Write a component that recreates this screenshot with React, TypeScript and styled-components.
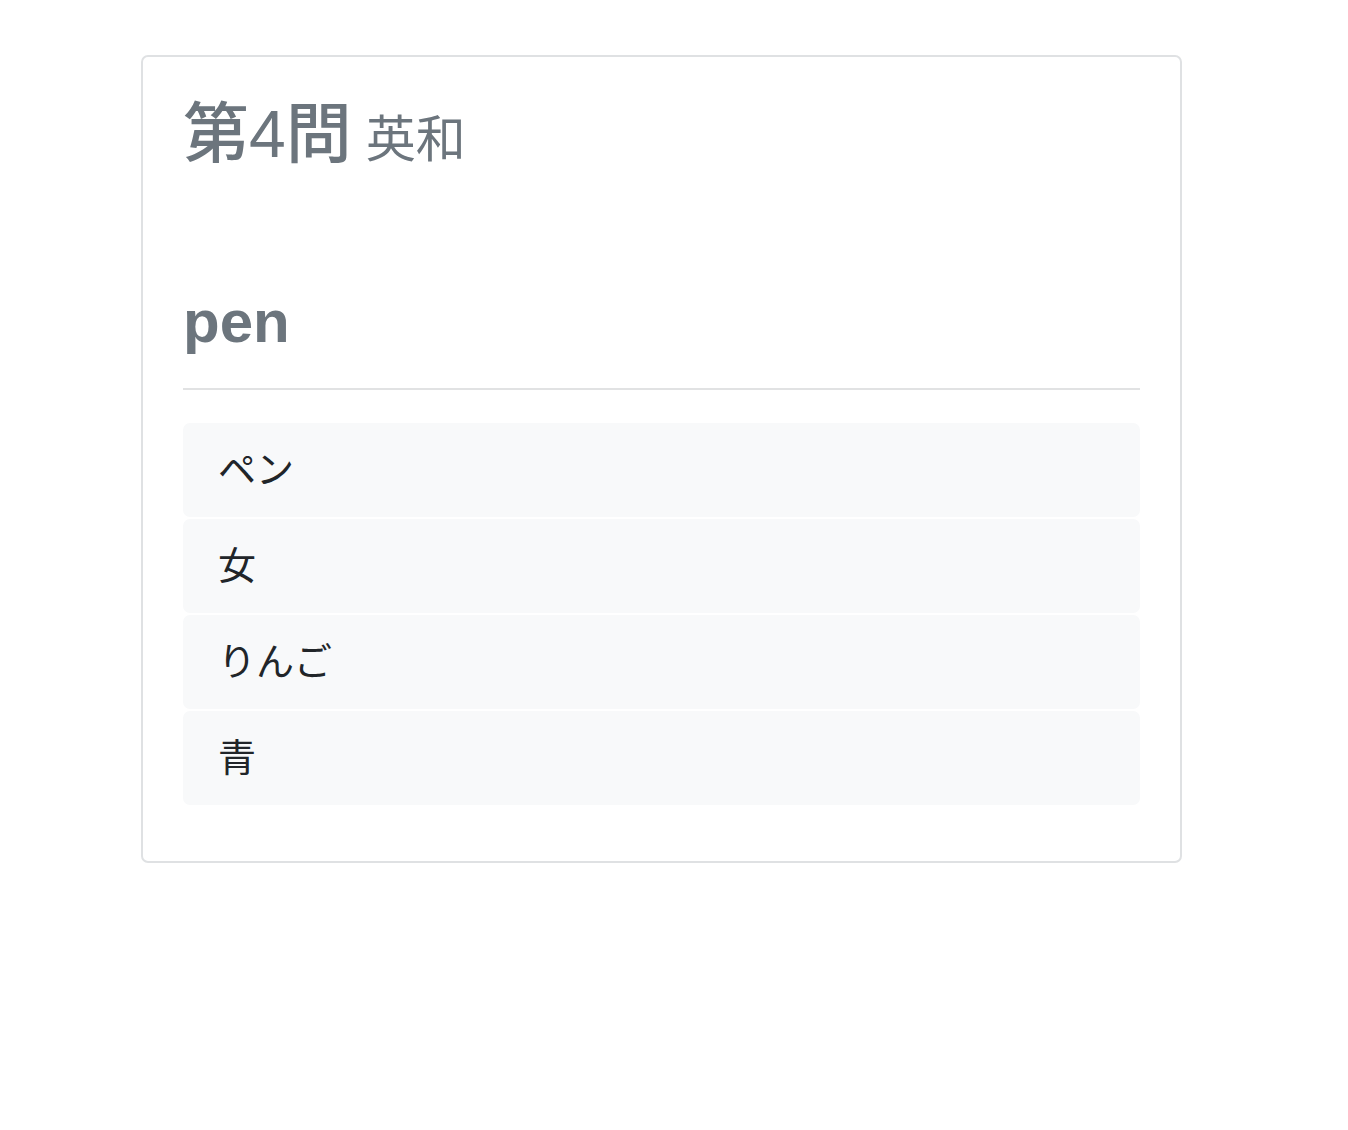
import React from "react";
import styled, { createGlobalStyle } from "styled-components";

const Global = createGlobalStyle`
  html, body { margin: 0; padding: 0; background: #fff; }
  body {
    font-family: "Liberation Sans", "Noto Sans CJK JP", sans-serif;
    color: #212529;
  }
`;

const Page = styled.main`
  padding: 55px 0 0 141px;
`;

const Card = styled.section`
  box-sizing: border-box;
  width: 1041px;
  border: 2px solid #dfe1e3;
  border-radius: 7px;
  padding: 38px 40px 56px;
  display: flex;
  flex-direction: column;
`;

const Title = styled.h1`
  margin: 0;
  font-size: 66px;
  line-height: 1.2;
  font-weight: 500;
  color: #6c757d;
  display: flex;
  align-items: baseline;
  gap: 14px;
`;

const Sub = styled.small`
  font-size: 50px;
  font-weight: 400;
`;

const Word = styled.h2`
  margin: 112px 0 0;
  font-size: 60px;
  line-height: 1.2;
  font-weight: 700;
  color: #6c757d;
`;

const Rule = styled.hr`
  margin: 30px 0 33px;
  border: 0;
  border-top: 2px solid #e1e2e3;
`;

const Choices = styled.ul`
  list-style: none;
  margin: 0;
  padding: 0;
  display: flex;
  flex-direction: column;
  gap: 2px;
`;

const Choice = styled.li`
  box-sizing: border-box;
  height: 94px;
  display: flex;
  align-items: center;
  padding: 0 35px 8px;
  background: #f8f9fa;
  border-radius: 7px;
  font-size: 38px;
  color: #212529;
`;

const choices = ["ペン", "女", "りんご", "青"];

export default function App() {
  return (
    <>
      <Global />
      <Page>
        <Card>
          <Title>
            第4問<Sub>英和</Sub>
          </Title>
          <Word>pen</Word>
          <Rule />
          <Choices>
            {choices.map((c) => (
              <Choice key={c}>{c}</Choice>
            ))}
          </Choices>
        </Card>
      </Page>
    </>
  );
}
